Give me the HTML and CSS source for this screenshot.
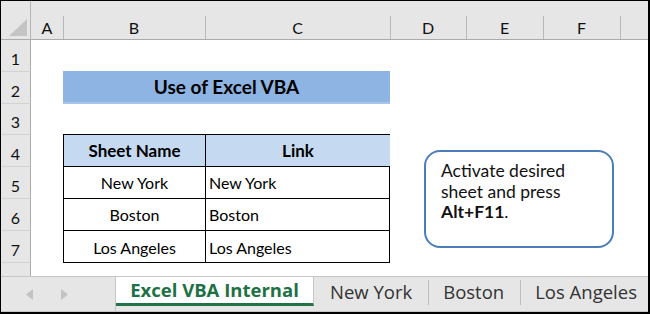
FILE: index.html
```html
<!DOCTYPE html>
<html>
<head>
<meta charset="utf-8">
<link rel="stylesheet" href="styles.css">
</head>
<body>
<div class="frame">
  <div class="sheet">
    <div class="corner"><svg class="tri" width="18" height="17" viewBox="0 0 18 17"><polygon points="18,0 18,17 0,17" fill="#c4c4c4"/></svg></div>
    <div class="ch">A</div>
    <div class="ch">B</div>
    <div class="ch">C</div>
    <div class="ch">D</div>
    <div class="ch">E</div>
    <div class="ch">F</div>
    <div class="ch"></div>

    <div class="rh r1">1</div>
    <div class="rh r2">2</div>
    <div class="rh r3">3</div>
    <div class="rh r4">4</div>
    <div class="rh r5">5</div>
    <div class="rh r6">6</div>
    <div class="rh r7">7</div>
    <div class="rh r8 last"></div>

    <div class="title">Use of Excel VBA</div>

    <div class="table">
      <div class="cell head">Sheet Name</div>
      <div class="cell head">Link</div>
      <div class="cell center">New York</div>
      <div class="cell">New York</div>
      <div class="cell center">Boston</div>
      <div class="cell">Boston</div>
      <div class="cell center">Los Angeles</div>
      <div class="cell">Los Angeles</div>
    </div>

    <div class="note">Activate desired sheet and press <b>Alt+F11</b>.</div>
  </div>

  <div class="tabbar">
    <div class="nav">
      <svg width="7" height="11" viewBox="0 0 7 11"><polygon points="7,0 7,11 0,5.5" fill="#c3c3c3"/></svg>
      <svg width="7" height="11" viewBox="0 0 7 11"><polygon points="0,0 0,11 7,5.5" fill="#c3c3c3"/></svg>
    </div>
    <div class="tab active">Excel VBA Internal</div>
    <div class="tab first">New York</div>
    <span class="sep"></span>
    <div class="tab">Boston</div>
    <span class="sep"></span>
    <div class="tab">Los Angeles</div>
  </div>
</div>
</body>
</html>
```

FILE: styles.css
```css
* { box-sizing: border-box; }
html, body { margin: 0; padding: 0; background: #fff; }

.frame {
  width: 650px;
  height: 314px;
  border-top: 1px solid #000;
  border-left: 1px solid #000;
  border-right: 2px solid #000;
  border-bottom: 2px solid #000;
  display: flex;
  flex-direction: column;
  overflow: hidden;
  font-family: Lato, "Liberation Sans", sans-serif;
  color: #000;
}

.sheet {
  position: relative;
  height: 275px;
  flex-shrink: 0;
  display: grid;
  grid-template-columns: 30px 32px 142px 185px 76px 77px 77px 1fr;
  grid-template-rows: 39px 32px 32px 31px 32px 32px 32px 32px 1fr;
  background: #fff;
}

.corner {
  background: #e6e6e6;
  border-bottom: 1px solid #ababab;
  border-right: 1px solid #b5b5b5;
  display: flex;
  align-items: flex-end;
  justify-content: flex-end;
  padding: 0 3px 3px 0;
}
.tri { display: block; }

.ch {
  background: linear-gradient(#b9b9b9, #b9b9b9) left bottom / 1px 23px no-repeat, #e6e6e6;
  border-bottom: 1px solid #ababab;
  display: flex;
  align-items: flex-end;
  justify-content: center;
  padding-bottom: 3px;
  font-size: 16px;
  line-height: 16px;
  color: #111;
}
.ch:nth-child(2) { background: #e6e6e6; }

.rh {
  grid-column: 1;
  background: #e6e6e6;
  border-right: 1px solid #ababab;
  border-bottom: 1px solid #d2d2d2;
  display: flex;
  align-items: flex-end;
  justify-content: center;
  padding-bottom: 4px;
  font-size: 16px;
  line-height: 16px;
  color: #111;
}
.rh.last { border-bottom: none; }

.title {
  grid-column: 3 / 5;
  grid-row: 3;
  margin-top: -1px;
  background: #8db4e2;
  border-bottom: 2px solid #a9c6ea;
  display: flex;
  align-items: center;
  justify-content: center;
  font-weight: 700;
  font-size: 19px;
}

.table {
  grid-column: 3 / 5;
  grid-row: 5 / 9;
  margin-top: -1px;
  display: grid;
  grid-template-columns: 142px 185px;
  grid-template-rows: 32px 32px 32px 33px;
  border-right: 1px solid #000;
  border-bottom: 1px solid #000;
}
.cell {
  border-top: 1px solid #000;
  border-left: 1px solid #000;
  display: flex;
  align-items: center;
  padding-left: 3px;
  font-size: 16px;
}
.cell.center { justify-content: center; padding-left: 0; }
.cell.head {
  background: #c5d9f1;
  justify-content: center;
  padding-left: 0;
  font-weight: 700;
  font-size: 17px;
}

.note {
  position: absolute;
  left: 423px;
  top: 149px;
  width: 190px;
  height: 98px;
  border: 2px solid #4a7ebb;
  border-radius: 16px;
  background: #fff;
  padding: 9px 36px 0 15px;
  font-size: 17.5px;
  line-height: 20.5px;
  color: #111;
}
.note b { font-weight: 700; }

.tabbar {
  flex: 1;
  display: flex;
  align-items: center;
  background: #e6e6e6;
  border-top: 1px solid #c6c6c6;
  border-bottom: 1px solid #c6c6c6;
  font-family: "Open Sans", "Noto Sans", sans-serif;
  font-size: 18.5px;
  color: #333;
  overflow: hidden;
}
.tabbar > * { flex-shrink: 0; }
.nav {
  width: 115px;
  align-self: stretch;
  border-right: 1px solid #c6c6c6;
  display: flex;
  align-items: center;
  gap: 28px;
  padding-left: 25px;
}
.nav svg { display: block; }
.tab {
  padding: 0 16px 0 14px;
  white-space: nowrap;
  line-height: 26px;
  margin-top: -4px;
}
.tab.first { padding-left: 16px; }
.tab.active {
  align-self: flex-start;
  width: 198px;
  height: 29px;
  margin-top: 0;
  background: #fff;
  border-right: 1px solid #c6c6c6;
  border-bottom: 3px solid #217346;
  color: #1e7145;
  font-weight: 700;
  font-size: 18.5px;
  text-align: center;
  padding: 0;
  line-height: 25px;
}
.sep {
  width: 1px;
  height: 25px;
  background: #bdbdbd;
  margin-top: -3px;
}
```
